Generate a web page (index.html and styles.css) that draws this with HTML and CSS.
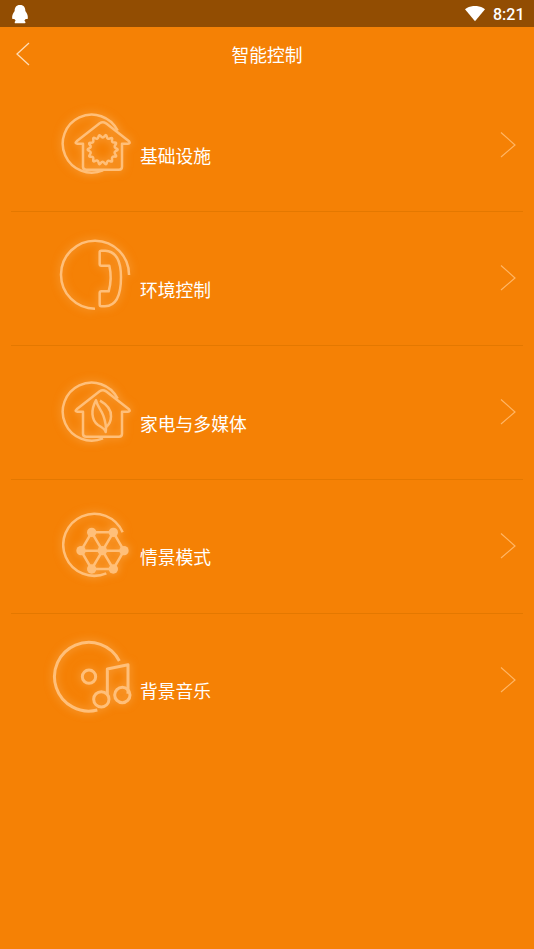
FILE: index.html
```html
<!DOCTYPE html>
<html lang="zh-CN">
<head>
<meta charset="utf-8">
<title>智能控制</title>
<link rel="stylesheet" href="styles.css">
</head>
<body>
<div class="status">
  <svg class="penguin" width="18" height="20" viewBox="0 0 54 60"><path d="M27 3C15 3 11 11 11 21C5 28 2 38 4 45H10L14 50C10 53 10 58 14 58H41C45 57 44 53 40 50L44 45H50C52 38 49 28 43 21C43 11 39 3 27 3Z"/></svg>
  <svg class="wifi" width="20" height="16" viewBox="0 0 20 16"><path d="M0 3.2C5.500-1.200 14.500-1.200 20 3.200L10 15.200Z"/></svg>
  <span class="time">8:21</span>
</div>
<header class="header">
  <svg class="back" width="16" height="26" viewBox="0 0 16 26"><path d="M14 2L2 13L14 24"/></svg>
  <h1 class="title">智能控制</h1>
</header>
<main class="list">
  <div class="row">
    <svg class="icon" viewBox="0 0 300 270">
      <path d="M218 92A87 87 0 1 0 174 211"/>
      <path d="M164 70Q173 64 183 70L252 124Q257 131 249 131H231V200Q231 209 222 209H124Q114 209 114 200V131H97Q88 130 95 124Z"/>
      <path transform="rotate(12.86 173 149)" d="M169.500 108.500Q173 100 176.500 108.500Q180 117 187 111Q194 105 194 114Q194 123 202.500 120.500Q211 118 207 126.500Q203 135 212 136.500Q221 138 213.500 143.500Q206 149 213.500 154.500Q221 160 212 161.500Q203 163 207 171.500Q211 180 202.500 177.500Q194 175 194 184Q194 193 187 187Q180 181 176.500 189.500Q173 198 169.500 189.500Q166 181 159 187Q152 193 152 184Q152 175 143.500 177.500Q135 180 139 171.500Q143 163 134 161.500Q125 160 132.500 154.500Q140 149 132.500 143.500Q125 138 134 136.500Q143 135 139 126.500Q135 118 143.500 120.500Q152 123 152 114Q152 105 159 111Q166 117 169.500 108.500Z"/>
    </svg>
    <span class="label">基础设施</span>
    <svg class="chevron" viewBox="0 0 16 26"><path d="M1 .5L15 13L1 25"/></svg>
  </div>
  <div class="row">
    <svg class="icon" viewBox="0 12 300 270">
      <path d="M252 135A102 102 0 1 0 150 236"/>
      <path d="M164 66Q164 62 169 62H181C214 64 228 96 228 142C228 194 213 228 180 229H169Q164 229 164 223V189Q164 184 169 184H191Q202 145 193 107H169Q164 107 164 102Z"/>
    </svg>
    <span class="label">环境控制</span>
    <svg class="chevron" viewBox="0 0 16 26"><path d="M1 .5L15 13L1 25"/></svg>
  </div>
  <div class="row">
    <svg class="icon" viewBox="0 0 300 270">
      <path d="M218 92A87 87 0 1 0 174 211"/>
      <path d="M164 70Q173 64 183 70L252 124Q257 131 249 131H231V197Q231 206 222 206H124Q114 206 114 197V131H97Q88 130 95 124Z"/>
      <path d="M153 97C137 125 139 157 159 171C174 179 180 183 182 192C185 174 180 157 175 143C169 125 157 116 153 97ZM165 98C188 111 199 127 198 145C198 159 192 170 184 177"/>
    </svg>
    <span class="label">家电与多媒体</span>
    <svg class="chevron" viewBox="0 0 16 26"><path d="M1 .5L15 13L1 25"/></svg>
  </div>
  <div class="row">
    <svg class="icon" viewBox="0 3 300 270">
      <path d="M233 97A93 93 0 1 0 184 220"/>
      <path d="M140 97H205L237 152L205 207H140L108 152ZM108 152H237M140 97L205 207M205 97L140 207"/>
      <g class="nodes"><circle cx="140" cy="97" r="14"/><circle cx="205" cy="97" r="14"/><circle cx="108" cy="152" r="14"/><circle cx="172" cy="152" r="14"/><circle cx="237" cy="152" r="14"/><circle cx="140" cy="207" r="14"/><circle cx="205" cy="207" r="14"/></g>
    </svg>
    <span class="label">情景模式</span>
    <svg class="chevron" viewBox="0 0 16 26"><path d="M1 .5L15 13L1 25"/></svg>
  </div>
  <div class="row">
    <svg class="icon disc" viewBox="0 10 300 270">
      <path d="M223 88A103 103 0 1 0 157 235"/>
      <circle cx="132" cy="135" r="20"/>
      <circle cx="169" cy="203" r="23"/>
      <circle cx="232" cy="190" r="23"/>
      <path d="M187 190V112L249 99V186"/>
    </svg>
    <span class="label">背景音乐</span>
    <svg class="chevron" viewBox="0 0 16 26"><path d="M1 .5L15 13L1 25"/></svg>
  </div>
</main>
</body>
</html>
```
FILE: styles.css
```css
* { box-sizing: border-box; }
body {
  margin: 0;
  min-height: 949px;
  background: #f58105;
  color: #fff;
  font-family: "Noto Sans CJK SC", sans-serif;
}
svg { display: block; flex: none; }
.status {
  display: flex;
  align-items: center;
  height: 27px;
  padding: 0 9.5px 0 11px;
  background: #924d02;
}
.penguin, .wifi { fill: #fff; }
.wifi { margin-left: auto; }
.time {
  margin-left: 8px;
  padding-top: 2px;
  font: 500 16px/20px Roboto, sans-serif;
}
.header {
  display: grid;
  grid-template-columns: 40px 1fr 40px;
  align-items: center;
  height: 51.4px;
}
.back {
  margin: 2px 0 0 15px;
  fill: none;
  stroke: #ffdcb4;
  stroke-width: 1.3;
}
.title {
  margin: 2px 0 0;
  text-align: center;
  font-size: 17.8px;
  line-height: 26px;
  font-weight: 400;
}
.list { padding: 0 11px; }
.row {
  display: flex;
  align-items: flex-start;
  height: 133.8px;
  padding: 21.6px 7px 0 34px;
  border-bottom: 1px solid #e47800;
}
.row:last-child { border-bottom: 0; }
.icon {
  width: 100px;
  height: 90px;
  overflow: visible;
  fill: none;
  stroke: #ffbf79;
  stroke-width: 7.5;
  stroke-linejoin: round;
  filter: blur(.3px) drop-shadow(0 0 4px rgba(255, 200, 135, .6));
}
.disc { stroke-width: 9; }
.nodes { fill: #ffbf79; stroke: none; }
.label {
  margin: 42px 0 0 -5px;
  font-size: 17.8px;
  line-height: 26px;
}
.chevron {
  width: 16px;
  height: 26px;
  margin: 31.6px 0 0 auto;
  fill: none;
  stroke: #ffb564;
  stroke-width: 1.2;
}
```
